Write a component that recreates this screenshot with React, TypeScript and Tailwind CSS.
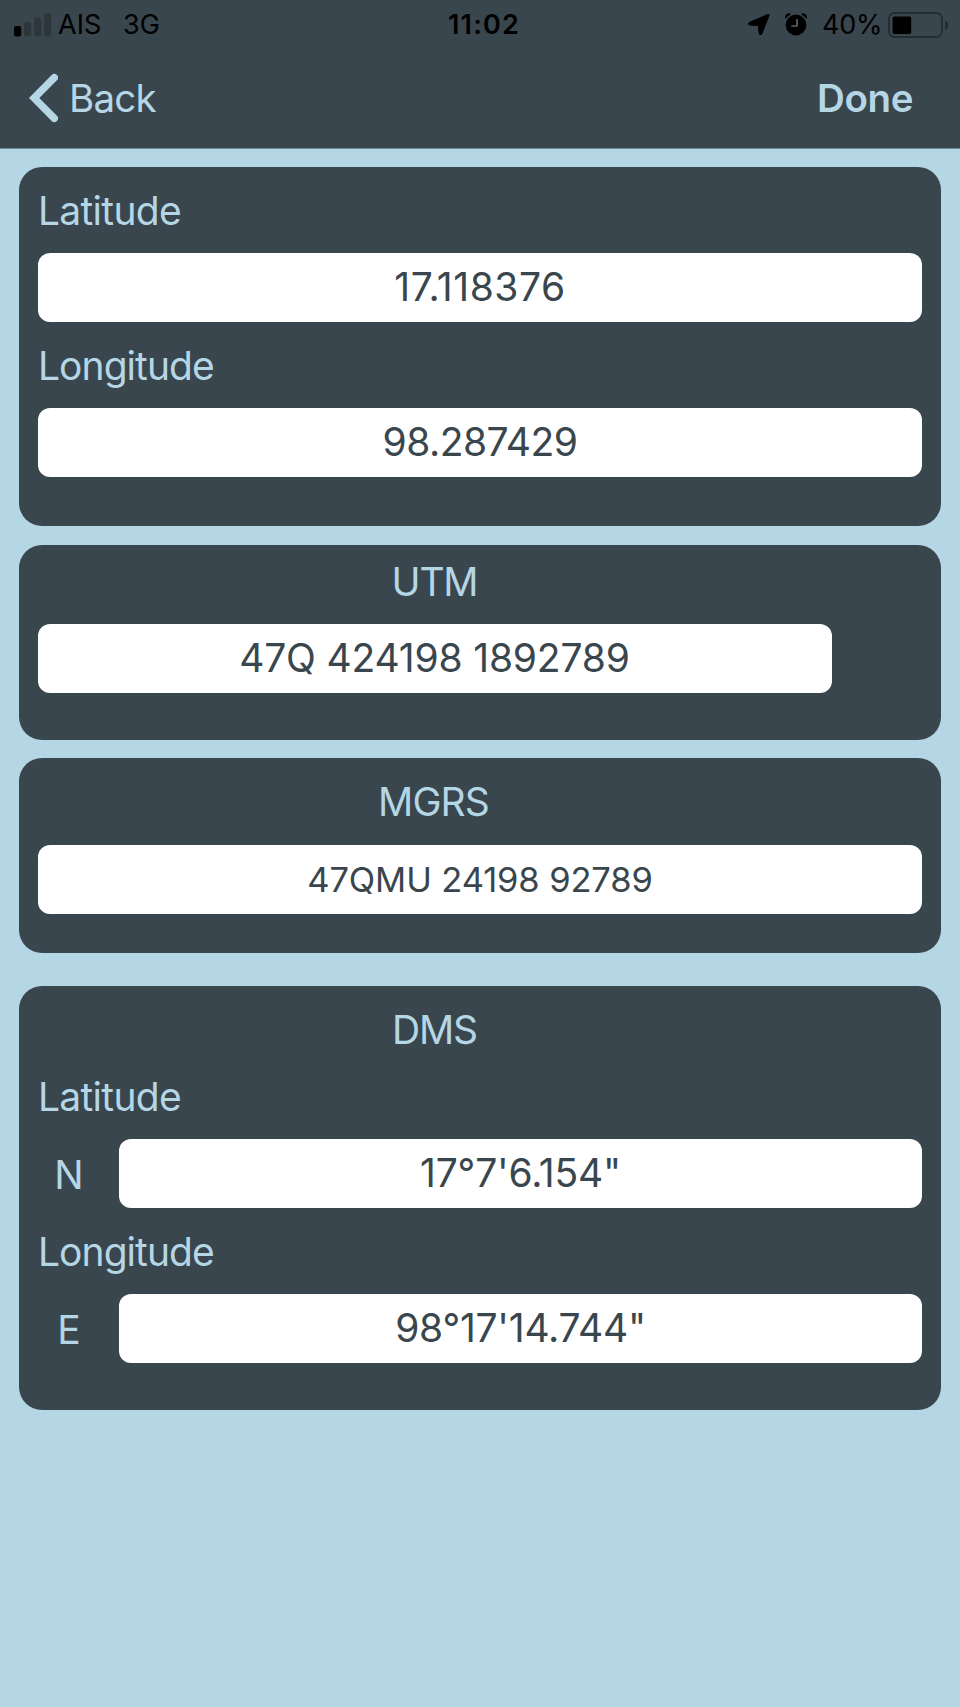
import { clsx } from "clsx";

function SignalBars() {
  return (
    <svg width="38" height="24" viewBox="0 0 38 24">
      <rect x="0" y="13" width="7.2" height="10.5" rx="2" fill="#000" />
      <rect x="10" y="9" width="7.2" height="14.5" rx="2" fill="#2d363b" />
      <rect x="20" y="4.3" width="7.2" height="19.2" rx="2" fill="#2d363b" />
      <rect x="30" y="0.3" width="7.2" height="23.2" rx="2" fill="#2d363b" />
    </svg>
  );
}

function LocationArrow() {
  return (
    <svg width="22" height="22" viewBox="0 0 22 22">
      <path d="M21.2 1 L14 19.4 Q12.4 22.4 11.2 19.6 L10.4 11.6 L2 11 Q-1 10.2 1.2 8.6 L19.8 0.4 Z" fill="#000" stroke="#000" strokeWidth="1" strokeLinejoin="round" />
    </svg>
  );
}

function AlarmIcon() {
  return (
    <svg width="22" height="23" viewBox="0 0 22 23">
      <circle cx="11" cy="12" r="10.4" fill="#000" />
      <path d="M0.2 6 A4.2 4.2 0 0 1 6 0.8 Z" fill="#000" />
      <path d="M21.8 6 A4.2 4.2 0 0 0 16 0.8 Z" fill="#000" />
      <path d="M12 6 V13 H6.4" fill="none" stroke="#56646c" strokeWidth="1.7" />
    </svg>
  );
}

function Battery() {
  return (
    <svg width="61" height="26" viewBox="0 0 61 26">
      <rect x="1" y="1" width="53" height="24" rx="5.5" fill="none" stroke="#252d31" strokeWidth="1.8" />
      <rect x="4.6" y="4.5" width="18.6" height="17.5" rx="1.8" fill="#000" />
      <path d="M57 8.6 Q60.4 10 60.4 13 Q60.4 16.4 57 17.8 Z" fill="#252d31" />
    </svg>
  );
}

function StatusBar() {
  return (
    <div className="flex h-[49px] items-center pl-3.5 pr-[11px] text-[27px] leading-[49px] text-black">
      <div className="flex w-[434px] items-center">
        <SignalBars />
        <span className="ml-[6px] w-[65px]">AIS</span>
        <span>3G</span>
      </div>
      <span className="w-[300px] font-semibold tracking-[1.2px]">11:02</span>
      <div className="flex flex-1 items-center">
        <LocationArrow />
        <span className="ml-[15px]">
          <AlarmIcon />
        </span>
        <span className="ml-[15px] w-[66px] tracking-[-0.3px]">40%</span>
        <Battery />
      </div>
    </div>
  );
}

function NavBar() {
  return (
    <div className="flex h-[98px] items-center justify-between pl-[29px] pr-[47px] text-[38.5px] leading-[98px]">
      <div className="flex items-center">
        <svg width="29" height="50" viewBox="0 0 29 50">
          <path d="M25.3 4.6 L5.2 25 L25.3 45.4" fill="none" stroke="#b5d6e5" strokeWidth="7.4" strokeLinecap="round" strokeLinejoin="miter" />
        </svg>
        <span className="ml-[11px] tracking-[-0.8px]">Back</span>
      </div>
      <span className="font-semibold tracking-[-0.4px]">Done</span>
    </div>
  );
}

function Card({ className, children }: { className?: string; children: React.ReactNode }) {
  return <section className={clsx("mx-[19px] rounded-[23px] bg-[#3a464d] px-[19px]", className)}>{children}</section>;
}

function Label({ className, children }: { className?: string; children: React.ReactNode }) {
  return <div className={clsx("h-12 leading-[48px]", className)}>{children}</div>;
}

function Field({ value, className }: { value: string; className?: string }) {
  return (
    <div className={clsx("h-[69px] rounded-xl bg-white text-center text-[#3a464d]", className)}>
      {value}
    </div>
  );
}

export default function App() {
  return (
    <div className="h-[1707px] w-[960px] overflow-hidden bg-[#b5d6e5] font-['Inter',sans-serif] text-[39px] text-[#b5d6e5]">
      <header className="h-[149px] border-b border-[#70858f] bg-[#3a464d]">
        <StatusBar />
        <NavBar />
      </header>

      <Card className="mt-[18px] h-[359px] pt-5">
        <Label className="tracking-[-0.7px]">Latitude</Label>
        <Field value="17.118376" className="mt-[18px] leading-[68px] tracking-[0.55px]" />
        <Label className="mt-5 tracking-[-0.95px]">Longitude</Label>
        <Field value="98.287429" className="mt-[18px] leading-[68px] tracking-[-0.5px]" />
      </Card>

      <Card className="mt-[19px] h-[195px] pt-[13px]">
        <Label className="w-[793px] text-center tracking-[-1.2px]">UTM</Label>
        <Field value="47Q 424198 1892789" className="mt-[18px] w-[794px] pr-px leading-[67px] tracking-[-0.18px]" />
      </Card>

      <Card className="mt-[18px] h-[195px] pt-5">
        <Label className="w-[791px] text-center tracking-[-0.9px]">MGRS</Label>
        <Field value="47QMU 24198 92789" className="mt-[19px] text-[34.5px] leading-[69px] tracking-[-0.12px]" />
      </Card>

      <Card className="mt-[33px] h-[424px] pt-5">
        <Label className="w-[793px] text-center tracking-[-1.2px]">DMS</Label>
        <Label className="mt-[19px] tracking-[-0.7px]">Latitude</Label>
        <div className="mt-[18px] flex">
          <span className="w-[62px] text-center leading-[72px]">N</span>
          <Field value={"17°7'6.154\""} className="ml-[19px] flex-1 leading-[68px] tracking-[-0.2px]" />
        </div>
        {/* the row above is 72px high, from the line height of its letter */}
        <Label className="mt-[17px] tracking-[-0.95px]">Longitude</Label>
        <div className="mt-[18px] flex">
          <span className="w-[62px] text-center leading-[72px]">E</span>
          <Field value={"98°17'14.744\""} className="ml-[19px] flex-1 leading-[68px] tracking-[-0.25px]" />
        </div>
      </Card>
    </div>
  );
}
